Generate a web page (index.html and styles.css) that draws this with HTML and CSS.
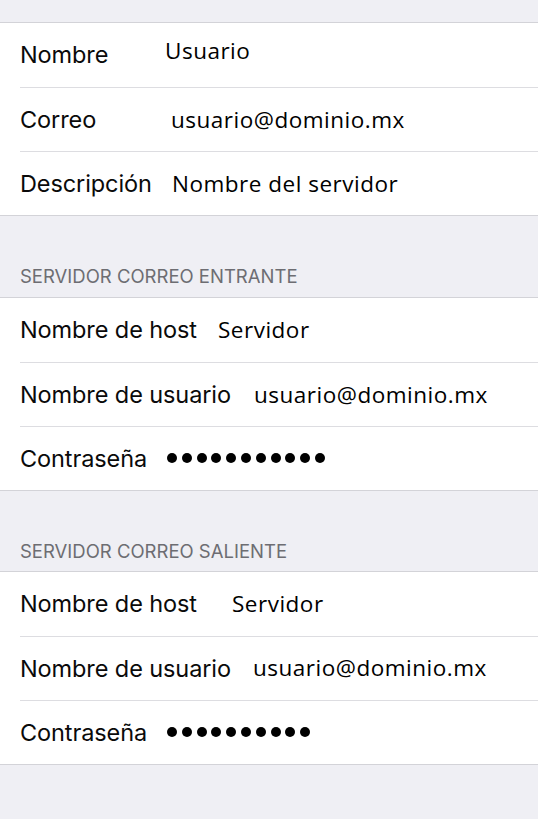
FILE: index.html
```html
<!DOCTYPE html>
<html lang="es">
<head>
<meta charset="utf-8">
<title>Cuenta de correo</title>
<link rel="stylesheet" href="styles.css">
</head>
<body>
<main class="settings">
  <div class="spacer-top"></div>
  <section class="group">
    <div class="row">
      <span class="label w145">Nombre</span>
      <span class="value raised">Usuario</span>
    </div>
    <div class="row">
      <span class="label w151">Correo</span>
      <span class="value">usuario@dominio.mx</span>
    </div>
    <div class="row">
      <span class="label w152">Descripción</span>
      <span class="value">Nombre del servidor</span>
    </div>
  </section>

  <h2 class="section-title">SERVIDOR CORREO ENTRANTE</h2>
  <section class="group">
    <div class="row">
      <span class="label w198">Nombre de host</span>
      <span class="value">Servidor</span>
    </div>
    <div class="row">
      <span class="label w234">Nombre de usuario</span>
      <span class="value">usuario@dominio.mx</span>
    </div>
    <div class="row">
      <span class="label w147">Contraseña</span>
      <span class="dots" aria-label="contraseña oculta">
        <i></i><i></i><i></i><i></i><i></i><i></i><i></i><i></i><i></i><i></i><i></i>
      </span>
    </div>
  </section>

  <h2 class="section-title second">SERVIDOR CORREO SALIENTE</h2>
  <section class="group">
    <div class="row">
      <span class="label w212">Nombre de host</span>
      <span class="value">Servidor</span>
    </div>
    <div class="row">
      <span class="label w233">Nombre de usuario</span>
      <span class="value raised-1">usuario@dominio.mx</span>
    </div>
    <div class="row">
      <span class="label w147">Contraseña</span>
      <span class="dots" aria-label="contraseña oculta">
        <i></i><i></i><i></i><i></i><i></i><i></i><i></i><i></i><i></i><i></i>
      </span>
    </div>
  </section>
</main>
</body>
</html>
```

FILE: styles.css
```css
html, body {
  margin: 0;
  padding: 0;
  background: #efeff4;
}

.settings {
  width: 538px;
  min-height: 819px;
  background: #efeff4;
  font-family: "Inter", "Liberation Sans", sans-serif;
}

.spacer-top {
  height: 22px;
}

.group {
  background: #ffffff;
  border-top: 1px solid #d3d3d8;
  border-bottom: 1px solid #d3d3d8;
}

.row {
  height: 64px;
  display: flex;
  align-items: center;
  padding-left: 20px;
  box-sizing: border-box;
}

.row + .row {
  background-image: linear-gradient(#dddde1, #dddde1);
  background-size: calc(100% - 20px) 1px;
  background-position: 20px 0;
  background-repeat: no-repeat;
  padding-top: 1px;
}

.label {
  flex: 0 0 auto;
  font-family: "Inter", "Liberation Sans", sans-serif;
  font-size: 23.5px;
  line-height: 28px;
  color: #0a0a0a;
  letter-spacing: -0.1px;
  white-space: nowrap;
}

.w145 { width: 145px; }
.w147 { width: 147px; }
.w151 { width: 151px; }
.w152 { width: 152px; }
.w198 { width: 198px; }
.w212 { width: 212px; }
.w233 { width: 233px; }
.w234 { width: 234px; }

.value {
  font-family: "Open Sans", "Liberation Sans", sans-serif;
  font-size: 22.5px;
  letter-spacing: 0.5px;
  line-height: 28px;
  color: #000000;
  white-space: nowrap;
}

.raised {
  margin-bottom: 8px;
}

.raised-1 {
  margin-bottom: 2px;
}

.dots {
  display: flex;
  gap: 4.8px;
  align-items: center;
  margin-bottom: 1px;
}

.dots i {
  display: block;
  width: 10px;
  height: 10px;
  border-radius: 50%;
  background: #000000;
}

.section-title {
  margin: 0;
  height: 81px;
  box-sizing: border-box;
  padding: 0 0 10px 20px;
  display: flex;
  align-items: flex-end;
  font-family: "Inter", "Liberation Sans", sans-serif;
  font-weight: 400;
  font-size: 18.5px;
  line-height: 22px;
  color: #6d6d72;
}

.section-title.second {
  height: 80px;
  padding-bottom: 9px;
}
```
